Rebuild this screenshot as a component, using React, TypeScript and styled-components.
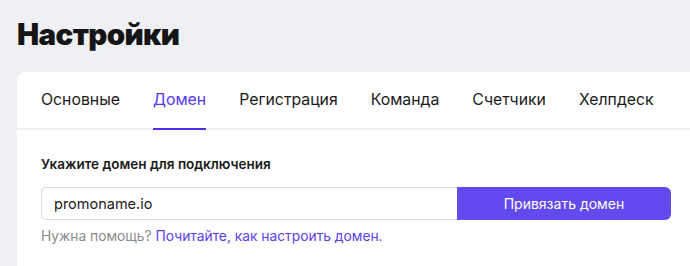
import React, { useState } from "react";
import styled, { createGlobalStyle } from "styled-components";

const GlobalStyle = createGlobalStyle`
    html, body {
        margin: 0;
        padding: 0;
        background: #EFF0F4;
        overflow: hidden;
    }
    body {
        font-family: Inter, "Noto Sans", sans-serif;
        color: #1A1A1A;
    }
`;

const Page = styled.div`
    width: 690px;
    height: 266px;
    padding-left: 17px;
    box-sizing: border-box;
    overflow: hidden;
`;

const Title = styled.h1`
    margin: 0;
    padding-top: 14px;
    height: 72px;
    box-sizing: border-box;
    font-size: 29.5px;
    line-height: 40px;
    font-weight: 900;
    letter-spacing: -0.6px;
    color: #151515;
`;

const Card = styled.div`
    width: 720px;
    background: #FFFFFF;
    border-radius: 8px 0 0 0;
    height: 220px;
`;

const Tabs = styled.div`
    display: flex;
    gap: 33px;
    padding: 0 24px;
    height: 58px;
    border-bottom: 2px solid #F1F1F4;
    box-sizing: border-box;
`;

interface TabProps {
    active: boolean;
}

const Tab = styled.button<TabProps>`
    position: relative;
    background: none;
    border: none;
    padding: 0;
    margin: 0;
    font-family: inherit;
    font-size: 15.8px;
    font-weight: 400;
    color: ${(p) => (p.active ? "#5538EE" : "#1A1A1A")};
    cursor: pointer;
    height: 56px;
    line-height: 56px;

    &::after {
        content: "";
        position: absolute;
        left: 0;
        right: 0;
        bottom: -2px;
        height: 2px;
        background: ${(p) => (p.active ? "#4B30F0" : "transparent")};
    }
`;

const Body = styled.div`
    padding: 24px 24px 0;
`;

const Label = styled.div`
    font-size: 13.5px;
    font-weight: 600;
    line-height: 20px;
    color: #1A1A1A;
    margin-bottom: 13px;
`;

const FieldRow = styled.div`
    display: flex;
    width: 630px;
    height: 33px;
`;

const Input = styled.input`
    flex: 1;
    border: 1px solid #DADADA;
    border-right: none;
    border-radius: 5px 0 0 5px;
    padding: 0 12px;
    font-family: inherit;
    font-size: 14.5px;
    color: #1A1A1A;
    outline: none;
    box-sizing: border-box;
`;

const BindButton = styled.button`
    width: 214px;
    background: #634AEE;
    color: #FFFFFF;
    border: none;
    border-radius: 0 6px 6px 0;
    font-family: inherit;
    font-size: 14px;
    cursor: pointer;
`;

const Help = styled.p`
    margin: 6px 0 0;
    font-size: 13.8px;
    line-height: 20px;
    color: #8A8A8A;
`;

const HelpLink = styled.a`
    color: #5A40EC;
    text-decoration: none;
`;

const tabs = ["Основные", "Домен", "Регистрация", "Команда", "Счетчики", "Хелпдеск"];

export default function App() {
    const [active, setActive] = useState(1);
    const [domain, setDomain] = useState("promoname.io");

    return (
        <Page>
            <GlobalStyle />
            <Title>Настройки</Title>
            <Card>
                <Tabs>
                    {tabs.map((t, i) => (
                        <Tab key={t} active={i === active} onClick={() => setActive(i)}>
                            {t}
                        </Tab>
                    ))}
                </Tabs>
                <Body>
                    <Label>Укажите домен для подключения</Label>
                    <FieldRow>
                        <Input value={domain} onChange={(e) => setDomain(e.target.value)} />
                        <BindButton>Привязать домен</BindButton>
                    </FieldRow>
                    <Help>
                        Нужна помощь? <HelpLink href="#">Почитайте, как настроить домен.</HelpLink>
                    </Help>
                </Body>
            </Card>
        </Page>
    );
}
